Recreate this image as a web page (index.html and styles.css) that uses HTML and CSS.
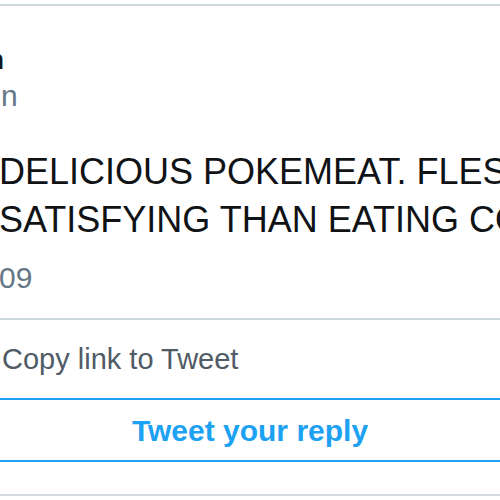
FILE: index.html
```html
<!DOCTYPE html>
<html>
<head>
<meta charset="utf-8">
<link rel="stylesheet" href="styles.css">
</head>
<body>
<div class="page">
  <div class="tweet">
    <div class="author">
      <div class="name"><span class="clip-name">n</span></div>
      <div class="handle">n</div>
    </div>
    <div class="text">
      <div class="line">DELICIOUS POKEMEAT. FLESH</div>
      <div class="line">SATISFYING THAN EATING COW</div>
    </div>
    <div class="date">09</div>
  </div>
  <div class="copy">Copy link to Tweet</div>
  <div class="reply">Tweet your reply</div>
  <div class="spacer"></div>
</div>
</body>
</html>
```
FILE: styles.css
```css
html, body {
  margin: 0;
  padding: 0;
  background: #ffffff;
  overflow: hidden;
}
body {
  font-family: "Liberation Sans", Arial, sans-serif;
  width: 500px;
  height: 500px;
}
.page {
  padding-top: 4px;
}
.tweet {
  border-top: 2px solid #ccd6dd;
  border-bottom: 2px solid #ccd6dd;
  padding-top: 32px;
  padding-bottom: 20px;
  overflow: hidden;
}
.author {
  display: flex;
  flex-direction: column;
}
.name {
  font-size: 28px;
  font-weight: bold;
  line-height: 44px;
  height: 38px;
  color: #14171a;
  white-space: nowrap;
}
.clip-name {
  display: inline-block;
  margin-left: -13px;
}
.handle {
  font-size: 30px;
  line-height: 40px;
  height: 40px;
  color: #657786;
  padding-left: 1px;
}
.text {
  margin-top: 32px;
  font-size: 36px;
  line-height: 48px;
  color: #101316;
  white-space: nowrap;
}
.line {
  margin-left: -1px;
  letter-spacing: 0;
}
.date {
  margin-top: 14px;
  font-size: 30px;
  line-height: 40px;
  color: #657786;
  margin-left: -1px;
}
.copy {
  font-size: 29px;
  line-height: 78px;
  height: 78px;
  color: #4f5b66;
  padding-left: 2px;
  white-space: nowrap;
}
.reply {
  border-top: 2px solid #1da1f2;
  border-bottom: 2px solid #1da1f2;
  height: 59px;
  line-height: 60px;
  padding-top: 1px;
  text-align: center;
  font-size: 30px;
  font-weight: bold;
  color: #1da1f2;
}
.spacer {
  height: 32px;
  border-bottom: 2px solid #d5d9e0;
}
```
